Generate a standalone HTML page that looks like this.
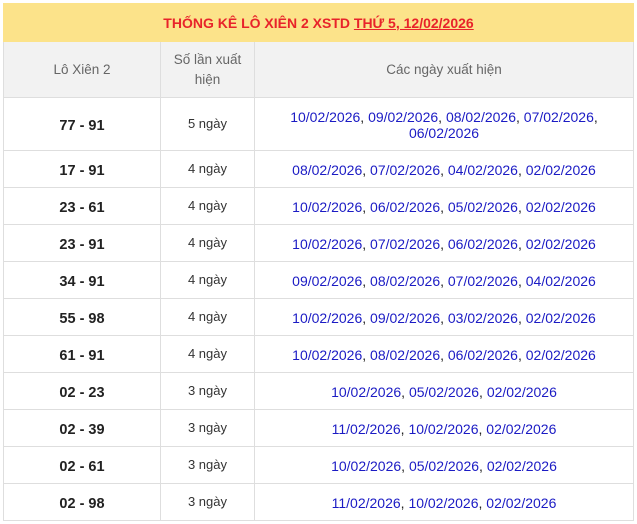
<!DOCTYPE html>
<html><head><meta charset="utf-8"><style>
body{margin:0;background:#fff;font-family:"Liberation Sans",Arial,sans-serif;}
table{position:absolute;left:3px;top:3px;width:631px;border-collapse:collapse;table-layout:fixed;}
td,th{border:1px solid #dedede;text-align:center;padding:0;vertical-align:middle;}
.t{background:#fce38a;height:37px;color:#e8232a;font-weight:bold;font-size:14px;border-color:#fce38a}
.t u{text-decoration:underline;}
.h th{background:#f2f2f2;color:#666;font-weight:normal;font-size:13.5px;height:55px;line-height:20px}
td{height:36px;font-size:13.5px;line-height:16px}
td.a{font-weight:bold;font-size:14.5px;color:#222;padding-top:3px;height:33px}
td.b{font-size:13px;color:#333}
td.c{color:#222;font-size:14px;padding-top:2px;height:34px}
.c span{color:#1b1bc4}
tr.f td{height:49px}
</style></head><body>
<table>
<colgroup><col style="width:157px"><col style="width:94px"><col></colgroup>
<tr><td colspan="3" class="t">THỐNG KÊ LÔ XIÊN 2 XSTD <u>THỨ 5, 12/02/2026</u></td></tr>
<tr class="h"><th>Lô Xiên 2</th><th>Số lần xuất<br>hiện</th><th>Các ngày xuất hiện</th></tr>
<tr class="f"><td class="a">77 - 91</td><td class="b">5 ngày</td><td class="c"><span>10/02/2026</span>, <span>09/02/2026</span>, <span>08/02/2026</span>, <span>07/02/2026</span>,<br><span>06/02/2026</span></td></tr>
<tr><td class="a">17 - 91</td><td class="b">4 ngày</td><td class="c"><span>08/02/2026</span>, <span>07/02/2026</span>, <span>04/02/2026</span>, <span>02/02/2026</span></td></tr>
<tr><td class="a">23 - 61</td><td class="b">4 ngày</td><td class="c"><span>10/02/2026</span>, <span>06/02/2026</span>, <span>05/02/2026</span>, <span>02/02/2026</span></td></tr>
<tr><td class="a">23 - 91</td><td class="b">4 ngày</td><td class="c"><span>10/02/2026</span>, <span>07/02/2026</span>, <span>06/02/2026</span>, <span>02/02/2026</span></td></tr>
<tr><td class="a">34 - 91</td><td class="b">4 ngày</td><td class="c"><span>09/02/2026</span>, <span>08/02/2026</span>, <span>07/02/2026</span>, <span>04/02/2026</span></td></tr>
<tr><td class="a">55 - 98</td><td class="b">4 ngày</td><td class="c"><span>10/02/2026</span>, <span>09/02/2026</span>, <span>03/02/2026</span>, <span>02/02/2026</span></td></tr>
<tr><td class="a">61 - 91</td><td class="b">4 ngày</td><td class="c"><span>10/02/2026</span>, <span>08/02/2026</span>, <span>06/02/2026</span>, <span>02/02/2026</span></td></tr>
<tr><td class="a">02 - 23</td><td class="b">3 ngày</td><td class="c"><span>10/02/2026</span>, <span>05/02/2026</span>, <span>02/02/2026</span></td></tr>
<tr><td class="a">02 - 39</td><td class="b">3 ngày</td><td class="c"><span>11/02/2026</span>, <span>10/02/2026</span>, <span>02/02/2026</span></td></tr>
<tr><td class="a">02 - 61</td><td class="b">3 ngày</td><td class="c"><span>10/02/2026</span>, <span>05/02/2026</span>, <span>02/02/2026</span></td></tr>
<tr><td class="a">02 - 98</td><td class="b">3 ngày</td><td class="c"><span>11/02/2026</span>, <span>10/02/2026</span>, <span>02/02/2026</span></td></tr>
</table>
</body></html>
